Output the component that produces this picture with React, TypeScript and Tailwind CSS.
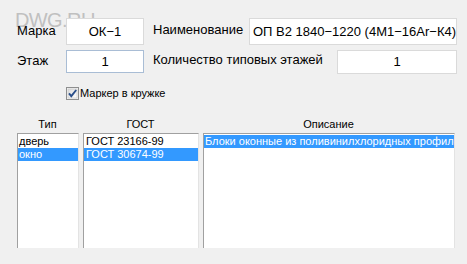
import React from "react";

const font = { fontFamily: '"Liberation Sans", Arial, sans-serif' };

function Checkbox() {
  return (
    <svg width="13" height="13" viewBox="0 0 13 13">
      <defs>
        <linearGradient id="cbg" x1="0" y1="0" x2="1" y2="1">
          <stop offset="0" stopColor="#dcdcdc" />
          <stop offset="1" stopColor="#ffffff" />
        </linearGradient>
      </defs>
      <rect x="0.5" y="0.5" width="12" height="12" fill="#f4f4f4" stroke="#8e8f8f" />
      <rect x="2" y="2" width="9" height="9" fill="url(#cbg)" stroke="#c4c4c4" strokeWidth="0.6" />
      <path d="M3 6.3 L5.3 9.2 L10.2 3" fill="none" stroke="#2a4f8a" strokeWidth="1.9" />
    </svg>
  );
}

export default function App() {
  return (
    <div className="relative w-[467px] h-[264px] bg-[#f0f0f0] overflow-hidden text-black" style={font}>
      <div className="absolute left-[15px] top-[9px] text-[20px] leading-[22px] text-[#c0c0c0] tracking-[-0.6px]">
        DWG.RU
      </div>
      <div className="relative pl-[17px] pt-[18px]">
        <div className="flex items-start">
          <div className="w-[49px] text-[13px] leading-[15px] mt-[5px]">Марка</div>
          <div className="w-[78px] h-[27px] bg-white border border-[#dadada] flex items-center justify-center text-[13px]">
            ОК−1
          </div>
          <div className="ml-[9px] w-[96px] text-[13px] leading-[15px] mt-[4px]">Наименование</div>
          <div className="w-[208px] h-[27px] bg-white border border-[#dadada] flex items-center pl-[3px] text-[13px] whitespace-nowrap overflow-hidden">
            ОП В2 1840−1220 (4М1−16Аr−К4)
          </div>
        </div>
        <div className="flex items-start mt-[5px]">
          <div className="w-[49px] text-[13px] leading-[15px] mt-[3px]">Этаж</div>
          <div className="w-[78px] h-[23px] bg-white border border-[#a9bdd5] flex items-center justify-center text-[13px]">
            1
          </div>
          <div className="ml-[9px] w-[184px] text-[13px] leading-[15px] mt-[2px]">Количество типовых этажей</div>
          <div className="w-[120px] h-[24px] bg-white border border-[#dadada] flex items-center justify-center text-[13px]">
            1
          </div>
        </div>
        <div className="flex items-center ml-[49px] mt-[13px] h-[13px]">
          <Checkbox />
          <span className="ml-[1px] text-[11px] leading-[13px]">Маркер в кружке</span>
        </div>
        <div className="flex mt-[18px] text-[11px] leading-[13px]">
          <div className="w-[61px] text-center">Тип</div>
          <div className="w-[115px] ml-[5px] text-center">ГОСТ</div>
          <div className="w-[251px] ml-[5px] text-center">Описание</div>
        </div>
        <div className="flex mt-[2px] text-[11px] leading-[13px]">
          <div className="w-[62px] h-[115px] bg-white border-l border-t border-[#a0a0a0] border-r border-r-[#e3e3e3] pt-[1px] overflow-hidden whitespace-nowrap">
            <div className="h-[13px] pl-[1px]">дверь</div>
            <div className="h-[13px] pl-[1px] bg-[#3399ff] text-white">окно</div>
          </div>
          <div className="w-[116px] ml-[4px] h-[115px] bg-white border-l border-t border-[#a0a0a0] border-r border-r-[#e3e3e3] pt-[1px] overflow-hidden whitespace-nowrap">
            <div className="h-[13px] pl-[2px]">ГОСТ 23166-99</div>
            <div className="h-[13px] pl-[2px] bg-[#3399ff] text-white">ГОСТ 30674-99</div>
          </div>
          <div className="w-[252px] ml-[4px] h-[115px] bg-white border-l border-t border-[#a0a0a0] border-r border-r-[#e3e3e3] pt-[1px] overflow-hidden whitespace-nowrap">
            <div className="h-[13px] pl-[1px] bg-[#3399ff] text-white">Блоки оконные из поливинилхлоридных профилей</div>
          </div>
        </div>
      </div>
    </div>
  );
}
